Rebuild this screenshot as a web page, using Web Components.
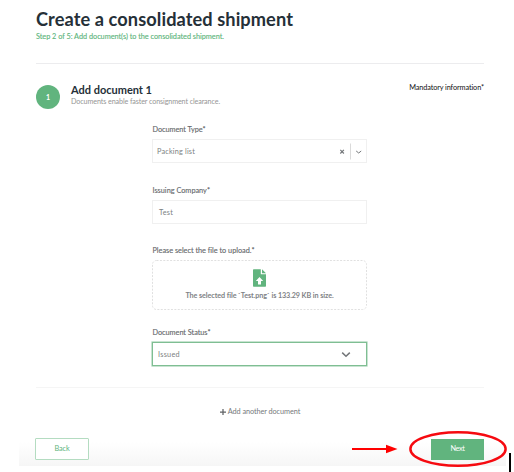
<!DOCTYPE html>
<html lang="en"><head><meta charset="utf-8"><title>Create a consolidated shipment</title>
<style>html,body{margin:0;background:#fff}body{width:514px;height:472px;overflow:hidden;font-family:Lato,"Open Sans",sans-serif}</style>
</head><body><shipment-page></shipment-page>
<script>
const define=(name,html,ready)=>customElements.define(name,class extends HTMLElement{
  connectedCallback(){
    if(this.shadowRoot)return;
    const t=document.createElement('template');t.innerHTML=html;
    this.attachShadow({mode:'open'}).append(t.content.cloneNode(true));
    if(ready)ready(this,this.shadowRoot);
  }
});

// One line of text, tracked so that it fills the width given in "w".
define('text-line',`<style>:host{display:block;white-space:nowrap;line-height:10px;height:10px;font-size:7.3px}span{display:inline-block}</style><span><slot></slot></span>`,
(el,root)=>{
  const s=root.querySelector('span'),w=parseFloat(el.getAttribute('w')),n=el.textContent.length;
  if(w)s.style.letterSpacing=((w-s.getBoundingClientRect().width)/n).toFixed(3)+'px';
});

define('page-header',`<style>
:host{display:block;height:63px;border-bottom:1px solid #ececee;box-sizing:border-box;padding-top:6px}
.t{font-size:18.2px;font-weight:700;line-height:24px;height:25px;color:#253038}
.s{color:#5db57c;-webkit-text-stroke:.12px #5db57c}
</style><text-line class="t" w="257">Create a consolidated shipment</text-line><text-line class="s" w="188">Step 2 of 5: Add document(s) to the consolidated shipment.</text-line>`);

define('section-heading',`<style>
:host{display:flex;height:24px;gap:11px}
.n{width:24px;height:24px;border-radius:50%;background:#61b47e;color:#fff;font-size:7px;font-weight:700;display:grid;place-items:center}
.m{flex:1;margin-top:-1px}.h{font-size:11px;font-weight:700;line-height:12px;height:13px;color:#253038}
.d{font-size:7.2px;color:#969696}.r{margin-top:-2px;color:#111}
</style><div class="n">1</div><div class="m"><text-line class="h" w="81">Add document 1</text-line><text-line class="d" w="149">Documents enable faster consignment clearance.</text-line></div><text-line class="r" w="75">Mandatory information*</text-line>`);

define('form-field',`<style>
:host{display:block}
.l{color:#65686b;margin-bottom:4px;padding:1px 0 0 .5px;-webkit-text-stroke:.12px #65686b}
</style><text-line class="l"></text-line><slot></slot>`,
(el,root)=>{
  const old=root.querySelector('.l'),l=document.createElement('text-line');
  l.className='l';l.setAttribute('w',el.getAttribute('w'));l.textContent=el.getAttribute('label');old.replaceWith(l);
});

define('input-box',`<style>
:host{display:flex;align-items:center;box-sizing:border-box;height:24px;width:215px;border:1px solid #f0f0f0;padding-left:4px;color:#7c7f82;background:#fff}
::slotted(text-line){padding-top:1px}
:host([plain]){padding-left:6px}
:host([focused]){border:1px solid #7fbe93;padding-left:5px;box-shadow:0 0 0 .6px #a5d3b3}
</style><slot></slot>`);

define('select-icons',`<style>:host{display:block;margin-left:auto;height:22px}svg{display:block}</style>
<svg width="28" height="22" fill="none" stroke="#74777a"><path d="M2.3 9.8l3.6 3.7m0-3.7l-3.6 3.7" stroke-width="1.15"/><path d="M12.5 3.5v16" stroke="#dadada"/><path d="M18.200 11l2.500 2 2.500-2" stroke-width="1"/></svg>`);

define('chevron-icon',`<style>:host{display:block;margin:0 15px 0 auto}svg{display:block}</style>
<svg width="10" height="7" fill="none" stroke="#74777a" stroke-width="1.5"><path d="M1.2 1.6L5 5.2l3.8-3.6"/></svg>`);

define('drop-zone',`<style>
:host{display:block;height:50px;position:relative;width:215px}
.frame{position:absolute;inset:0}
.c{display:flex;flex-direction:column;align-items:center;padding-top:9px;gap:4px}
text-line{font-size:7.2px;font-weight:700;color:#808285}
svg{display:block}
</style><svg class="frame" width="215" height="50"><rect x=".5" y=".5" width="214" height="49" rx="4" fill="none" stroke="#e0e0e0" stroke-dasharray="2 1.4"/></svg>
<div class="c"><svg width="13" height="18" viewBox="0 0 13 18"><path fill="#61b47e" d="M0 1Q0 .3.7.3H7.8V5.2H13V17q0 .7-.7.7H.7Q0 17.700 0 17Z"/><path fill="#61b47e" d="M9 .3L13 4.300H9Z"/><path fill="#fff" d="M6.500 7.900L10.200 12H8v3.400H5V12H2.800Z"/></svg>
<text-line w="148">The selected file \`Test.png\` is 133.29 KB in size.</text-line></div>`);

define('add-link',`<style>
:host{display:flex;justify-content:center;align-items:center;gap:2px;height:10px;color:#76797c;padding-left:0}
svg{display:block}</style><svg width="6" height="8" stroke="#606366" stroke-width="1.25"><path d="M3 1v6M0 4h6"/></svg><text-line w="72.500">Add another document</text-line>`);

define('action-button',`<style>
:host{display:grid;place-items:center;box-sizing:border-box;width:53px;height:21px;background:#61b47e;color:#fff}
:host([outline]){width:54px;height:22px;background:#fff;border:1px solid #b4dcc1;border-radius:1px;color:#61b47e}
text-line{font-size:7px}</style><slot></slot>`);

define('callout-marks',`<style>:host{position:absolute;left:345px;top:425px}svg{display:block}</style>
<svg width="169" height="47"><path d="M7 24H43" stroke="#f00" stroke-width="1.8"/><path d="M41 19.700L52.500 24 41 28.300Z" fill="#f00"/><ellipse cx="113" cy="24" rx="47.600" ry="16.700" fill="none" stroke="#f60a10" stroke-width="2.500"/><path d="M164 28h2v19H164Z"/></svg>`);

define('shipment-page',`<style>
:host{display:block;position:relative;height:472px;background:linear-gradient(#fff,#f6f6f6) 19px 442px/487px 24px no-repeat}
main{padding:1px 30px 0 36px;height:472px;box-sizing:border-box}
section-heading{margin-top:21px}
form{display:block;margin:15px 0 0 116px}
.f2{margin-top:22px}.f3{margin-top:21px}.f4{margin-top:17px}
hr{border:0;border-top:1px solid #f5f5f5;margin:21px 0 19px}
footer{display:flex;justify-content:space-between;align-items:center;margin:21px 0 0 -1px}
</style><main><page-header></page-header><section-heading></section-heading>
<form>
<form-field label="Document Type*" w="53"><input-box><text-line w="38">Packing list</text-line><select-icons></select-icons></input-box></form-field>
<form-field class="f2" label="Issuing Company*" w="57.500"><input-box plain><text-line w="14">Test</text-line></input-box></form-field>
<form-field class="f3" label="Please select the file to upload.*" w="102"><drop-zone></drop-zone></form-field>
<form-field class="f4" label="Document Status*" w="58"><input-box focused><text-line w="22">Issued</text-line><chevron-icon></chevron-icon></input-box></form-field>
</form><hr><add-link></add-link>
<footer><action-button outline><text-line w="15">Back</text-line></action-button><action-button><text-line w="14">Next</text-line></action-button></footer></main><callout-marks></callout-marks>`);
</script></body></html>
